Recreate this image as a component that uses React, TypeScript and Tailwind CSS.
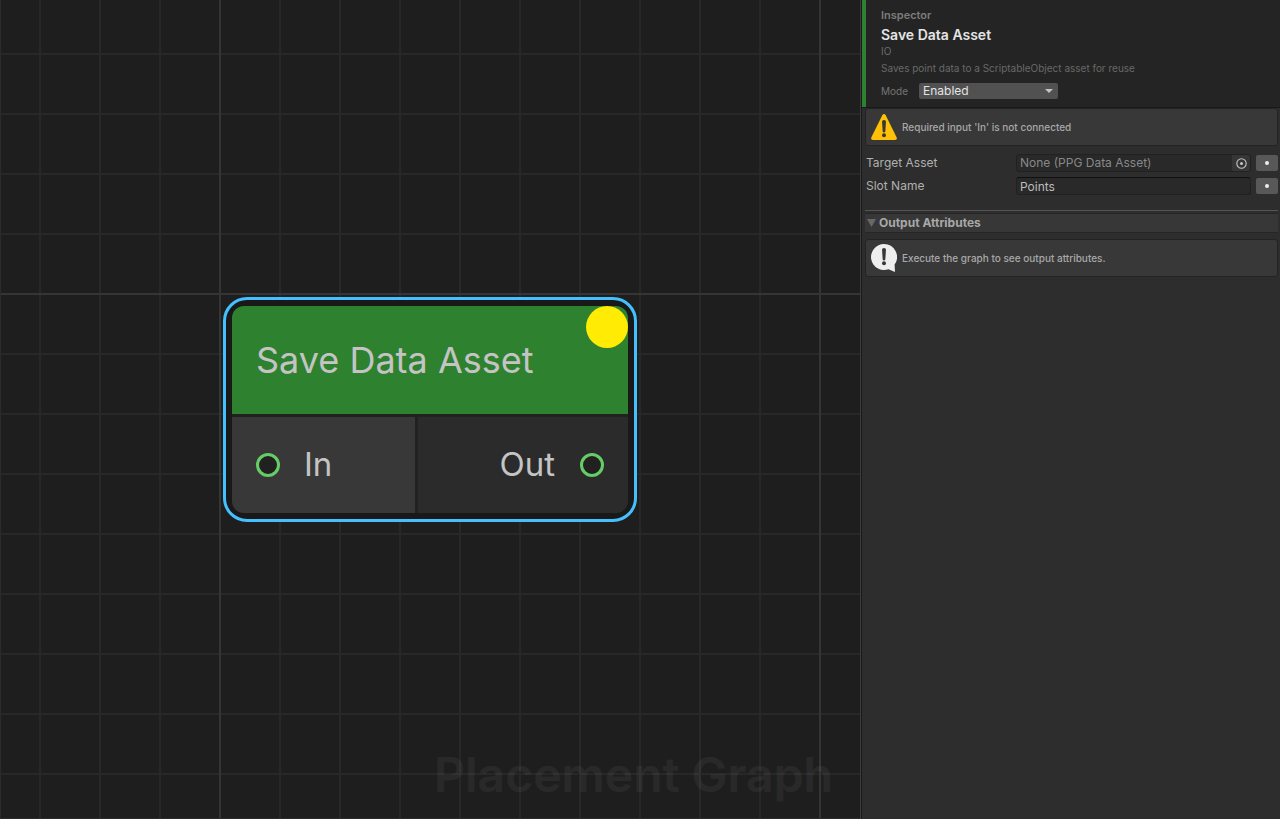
import type { ReactNode } from "react"

function GridBackground() {
  return (
    <svg className="absolute inset-0 h-full w-full" aria-hidden="true">
      <defs>
        <pattern id="minor" width="60" height="60" patternUnits="userSpaceOnUse">
          <path d="M39 0h2v60h-2zM0 53h60v2H0z" fill="#282828" />
        </pattern>
        <pattern id="major" width="600" height="600" patternUnits="userSpaceOnUse">
          <path d="M219 0h2v600h-2zM0 293h600v2H0z" fill="#353535" />
        </pattern>
      </defs>
      <rect width="100%" height="100%" fill="url(#minor)" />
      <rect width="100%" height="100%" fill="url(#major)" />
    </svg>
  )
}

function Port() {
  return <span className="h-6 w-6 rounded-full border-[3px] border-[#66cc66] bg-[#212121]" />
}

function GraphNode() {
  return (
    <div className="absolute left-[223px] top-[297px] w-[414px] rounded-3xl border-[3px] border-[#44c0ff] bg-[#191919] p-1.5 text-[#c4c4c4]">
      <div className="overflow-hidden rounded-xl bg-[#212121]">
        <div className="relative flex h-[108px] items-center bg-[#2e812e] pl-6">
          <h2 className="text-4xl">Save Data Asset</h2>
          <span className="absolute right-0 top-0 h-[42px] w-[42px] rounded-full bg-[#ffeb04]" />
        </div>
        <div className="mt-[3px] flex h-24 gap-[3px] text-[33px]">
          <div className="flex w-[183px] items-center gap-6 bg-[#383838] pl-6">
            <Port />
            In
          </div>
          <div className="flex flex-1 items-center justify-end gap-[25px] bg-[#2b2b2b] pr-6">
            Out
            <Port />
          </div>
        </div>
      </div>
    </div>
  )
}

function WarningIcon() {
  return (
    <svg viewBox="0 0 26 26" className="h-[26px] w-[26px] shrink-0">
      <path d="M11.4 1Q13-1 14.6 1L25.7 23.6Q26.4 26 24 26H2Q-.4 26 .3 23.6Z" fill="#ffc107" />
      <path d="M11 7.5Q11 6 13 6T15 7.5L14.3 17.5Q14 18.5 13 18.5T11.7 17.5Z" fill="#383838" />
      <circle cx="13" cy="21.2" r="2" fill="#383838" />
    </svg>
  )
}

function InfoIcon() {
  return (
    <svg viewBox="0 0 26 28" className="h-7 w-[26px] shrink-0">
      <path d="M13 0A13 13 0 1 0 17.5 25.2L24 28L23.6 20.5A13 13 0 0 0 13 0Z" fill="#eeeeee" />
      <path d="M11 5.5Q11 4 13 4T15 5.5L14.3 15.5Q14 16.5 13 16.5T11.7 15.5Z" fill="#383838" />
      <circle cx="13" cy="19.2" r="2" fill="#383838" />
    </svg>
  )
}

function HelpBox({ icon, children }: { icon: ReactNode; children: ReactNode }) {
  return (
    <div className="ml-[3px] mr-0.5 flex h-[38px] items-center gap-[5px] rounded-[3px] border border-[#232323] bg-[#383838] pl-[5px] text-[10px] font-medium text-[#a8a8a8]">
      {icon}
      <p>{children}</p>
    </div>
  )
}

function DotButton({ label }: { label: string }) {
  return (
    <button aria-label={label} className="flex h-4 w-[22px] items-center justify-center rounded-xs bg-[#585858]">
      <span className="h-1 w-1 rounded-full bg-[#eeeeee]" />
    </button>
  )
}

function InspectorHeader() {
  return (
    <header className="h-[107px] border-l-4 border-[#2e812e] bg-[#242424] pl-[15px] pt-2">
      <p className="text-[11px] leading-[14px] font-semibold text-[#7c7c7c]">Inspector</p>
      <h1 className="mt-1 text-sm leading-[18px] font-semibold text-[#e4e4e4]">Save Data Asset</h1>
      <p className="text-[10px] leading-[14px] text-[#6c6c6c]">IO</p>
      <p className="mt-[3px] text-[10px] leading-[14px] text-[#686868]">Saves point data to a ScriptableObject asset for reuse</p>
      <div className="mt-2 flex items-center">
        <label htmlFor="mode" className="w-[38px] text-[10px] text-[#747474]">Mode</label>
        <div className="relative">
          <select id="mode" className="block h-4 w-[139px] appearance-none rounded-xs bg-[#515151] px-1 text-xs leading-4 text-[#e4e4e4]">
            <option>Enabled</option>
            <option>Disabled</option>
          </select>
          <svg viewBox="0 0 8 4" className="pointer-events-none absolute right-[5px] top-1.5 h-1 w-2">
            <path d="M0 0h8L4 4z" fill="#c4c4c4" />
          </svg>
        </div>
      </div>
    </header>
  )
}

function Inspector() {
  return (
    <aside className="flex w-[420px] shrink-0 flex-col border-l border-[#3c3c3c] bg-[#2d2d2d]">
      <div className="flex-1 border-l border-[#1a1a1a]">
        <InspectorHeader />
        <div className="border-t border-[#191919]">
          <HelpBox icon={<WarningIcon />}>Required input 'In' is not connected</HelpBox>
        </div>

        <div className="mt-2 flex flex-col gap-[5px] pl-1 pr-0.5 text-xs text-[#b0b0b0]">
          <div className="flex h-[18px] items-center gap-[5px]">
            <label htmlFor="target" className="w-[145px] shrink-0 leading-[18px]">Target Asset</label>
            <div className="flex h-[18px] flex-1 overflow-hidden rounded-[3px] border border-[#212121] bg-[#292929]">
              <input id="target" readOnly value="None (PPG Data Asset)" className="min-w-0 flex-1 bg-transparent px-[3px] text-[#888888] outline-none" />
              <button aria-label="Select asset" className="flex w-[18px] items-center justify-center bg-[#363636]">
                <svg viewBox="0 0 11 11" className="h-[11px] w-[11px]">
                  <circle cx="5.5" cy="5.5" r="4.7" fill="none" stroke="#c4c4c4" strokeWidth="1.1" />
                  <circle cx="5.5" cy="5.5" r="1.5" fill="#c4c4c4" />
                </svg>
              </button>
            </div>
            <DotButton label="Target Asset options" />
          </div>
          <div className="flex h-[18px] items-center gap-[5px]">
            <label htmlFor="slot" className="w-[145px] shrink-0 leading-[18px]">Slot Name</label>
            <input id="slot" defaultValue="Points" className="h-[18px] min-w-0 flex-1 rounded-[3px] border border-[#212121] border-t-[#101010] bg-[#292929] px-[3px] text-[#bcbcbc] outline-none" />
            <DotButton label="Slot Name options" />
          </div>
        </div>

        <section className="mt-[15px]">
          <div className="ml-[3px] mr-0.5 border-t border-[#545454] pt-0.5">
            <button className="flex h-5 w-full items-center gap-[3px] border-y border-[#262626] bg-[#373737] pl-0.5 text-xs font-bold text-[#a8a8a8]">
              <svg viewBox="0 0 9 8" className="h-2 w-[9px]">
                <path d="M0 0h9L4.500 8z" fill="#686868" />
              </svg>
              Output Attributes
            </button>
          </div>
          <div className="mt-1.5">
            <HelpBox icon={<InfoIcon />}>Execute the graph to see output attributes.</HelpBox>
          </div>
        </section>
      </div>
    </aside>
  )
}

export default function App() {
  return (
    <div className="flex h-screen overflow-hidden bg-[#1e1e1e] font-['Inter',sans-serif]">
      <main className="relative flex-1 overflow-hidden border-b border-l border-[#2b2b2b]">
        <div className="absolute -left-px inset-y-0 right-0">
          <GridBackground />
          <p className="absolute bottom-3 right-[27px] text-5xl leading-[62px] font-semibold text-white/5">Placement Graph</p>
          <GraphNode />
        </div>
      </main>
      <Inspector />
    </div>
  )
}
